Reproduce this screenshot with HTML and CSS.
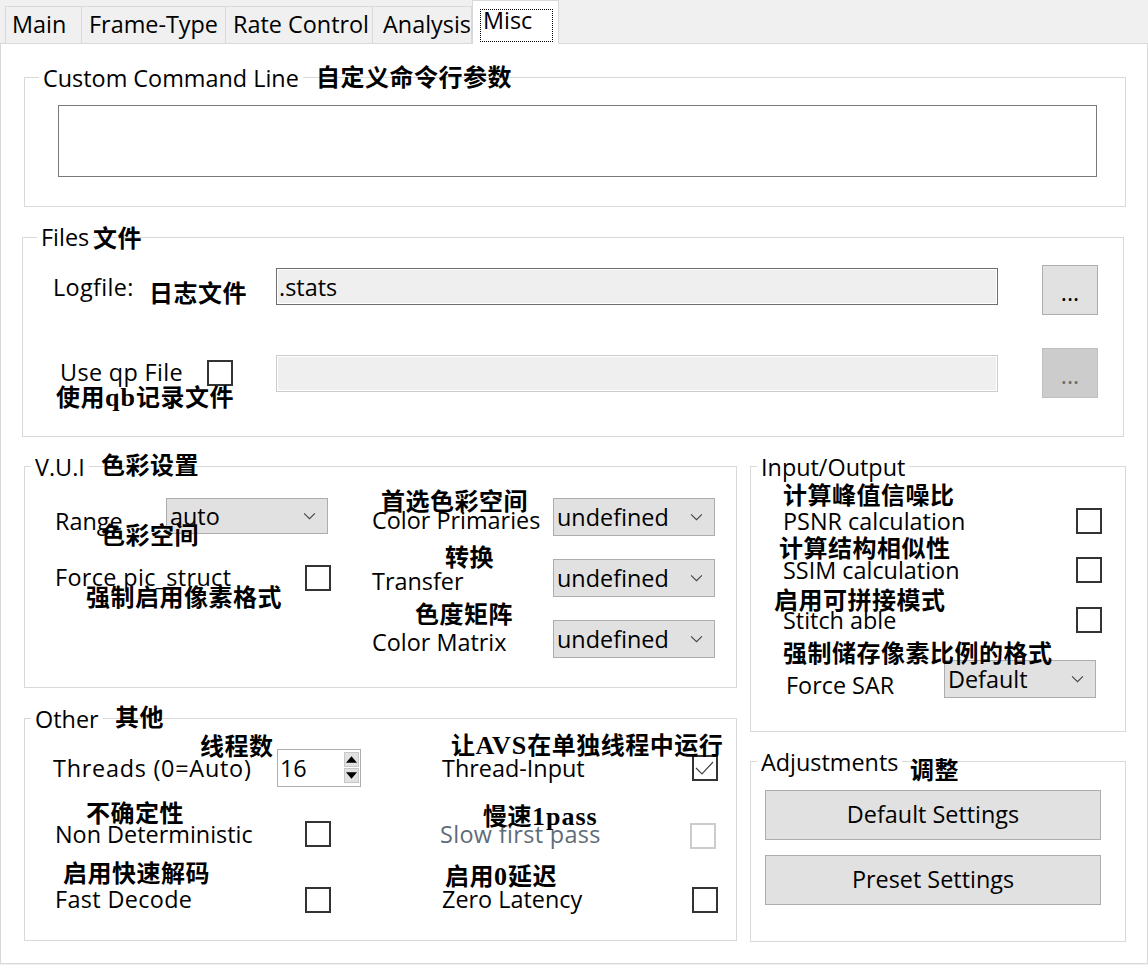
FILE: index.html
```html
<!DOCTYPE html>
<html lang="en">
<head>
    <meta charset="UTF-8">
    <meta name="viewport" content="width=device-width, initial-scale=1.0">
    <title>Misc settings</title>
    <link rel="stylesheet" href="styles.css">
</head>
<body>
    <div class="tabs">
        <div class="tab tab-main">Main</div>
        <div class="tab tab-frame">Frame-Type</div>
        <div class="tab tab-rate">Rate Control</div>
        <div class="tab tab-analysis">Analysis</div>
        <div class="tab tab-active"><span class="focus">Misc</span></div>
    </div>

    <div class="pane">
        <section class="group group-custom">
            <div class="group-title title-wide">Custom Command Line</div>
            <textarea class="command"></textarea>
            <span class="note note-custom">自定义命令行参数</span>
        </section>

        <section class="group group-files">
            <div class="group-title title-wide title-files">Files</div>
            <div class="files-grid">
                <label class="logfile-label label-wide">Logfile:</label>
                <input class="path path-log" type="text" value=".stats">
                <button class="browse" type="button">...</button>
                <label class="qp-label label-wide">Use qp File</label>
                <span class="check"></span>
                <input class="path" type="text" disabled>
                <button class="browse" type="button" disabled>...</button>
            </div>
            <span class="note note-files">文件</span>
            <span class="note note-logfile">日志文件</span>
            <span class="note note-qp">使用<span class="latin">qb</span>记录文件</span>
        </section>

        <div class="columns">
            <div class="column">
                <section class="group group-vui">
                    <div class="group-title">V.U.I</div>
                    <div class="vui-grid">
                        <div class="stack">
                            <div class="row">
                                <label class="label-range">Range</label>
                                <div class="select select-range">auto<svg class="chevron" viewBox="0 0 12 7"><path d="M1 1l5 5 5-5"/></svg></div>
                            </div>
                            <div class="row">
                                <label class="label-up label-wide">Force pic_struct</label>
                                <span class="check"></span>
                            </div>
                        </div>
                        <div class="stack">
                            <div class="row">
                                <label class="label-down">Color Primaries</label>
                                <div class="select">undefined<svg class="chevron" viewBox="0 0 12 7"><path d="M1 1l5 5 5-5"/></svg></div>
                            </div>
                            <div class="row">
                                <label class="label-down">Transfer</label>
                                <div class="select">undefined<svg class="chevron" viewBox="0 0 12 7"><path d="M1 1l5 5 5-5"/></svg></div>
                            </div>
                            <div class="row">
                                <label class="label-down">Color Matrix</label>
                                <div class="select">undefined<svg class="chevron" viewBox="0 0 12 7"><path d="M1 1l5 5 5-5"/></svg></div>
                            </div>
                        </div>
                    </div>
                    <span class="note note-vui">色彩设置</span>
                    <span class="note note-range">色彩空间</span>
                    <span class="note note-pic">强制启用像素格式</span>
                    <span class="note note-primaries">首选色彩空间</span>
                    <span class="note note-transfer">转换</span>
                    <span class="note note-matrix">色度矩阵</span>
                </section>

                <section class="group group-other">
                    <div class="group-title">Other</div>
                    <div class="other-grid">
                        <div class="stack stack-other">
                            <div class="row">
                                <label class="label-threads">Threads (0=Auto)</label>
                                <div class="spin">16
                                    <div class="spin-buttons">
                                        <span class="spin-btn"><svg viewBox="0 0 10 6"><path d="M5 0l5 6H0z"/></svg></span>
                                        <span class="spin-btn"><svg viewBox="0 0 10 6"><path d="M0 0h10L5 6z"/></svg></span>
                                    </div>
                                </div>
                            </div>
                            <div class="row row-inset">
                                <label>Non Deterministic</label>
                                <span class="check"></span>
                            </div>
                            <div class="row row-inset">
                                <label class="label-up label-wide">Fast Decode</label>
                                <span class="check"></span>
                            </div>
                        </div>
                        <div class="stack stack-other">
                            <div class="row">
                                <label>Thread-Input</label>
                                <span class="check"><svg viewBox="0 0 22 22"><path d="M2 11l6 6 11-12"/></svg></span>
                            </div>
                            <div class="row row-slow">
                                <label class="disabled label-wide">Slow first pass</label>
                                <span class="check check-disabled"></span>
                            </div>
                            <div class="row">
                                <label class="label-up">Zero Latency</label>
                                <span class="check"></span>
                            </div>
                        </div>
                    </div>
                    <span class="note note-other">其他</span>
                    <span class="note note-threads">线程数</span>
                    <span class="note note-nondet">不确定性</span>
                    <span class="note note-fast">启用快速解码</span>
                    <span class="note note-input">让<span class="latin">AVS</span>在单独线程中运行</span>
                    <span class="note note-slow">慢速<span class="latin">1pass</span></span>
                    <span class="note note-zero">启用<span class="latin">0</span>延迟</span>
                </section>
            </div>

            <div class="column">
                <section class="group group-io">
                    <div class="group-title">Input/Output</div>
                    <div class="io-list">
                        <div class="row">
                            <label>PSNR calculation</label>
                            <span class="check"></span>
                        </div>
                        <div class="row">
                            <label>SSIM calculation</label>
                            <span class="check"></span>
                        </div>
                        <div class="row row-stitch">
                            <label>Stitch able</label>
                            <span class="check"></span>
                        </div>
                        <div class="row row-sar">
                            <label class="label-sar">Force SAR</label>
                            <div class="select select-sar">Default<svg class="chevron" viewBox="0 0 12 7"><path d="M1 1l5 5 5-5"/></svg></div>
                        </div>
                    </div>
                    <span class="note note-psnr">计算峰值信噪比</span>
                    <span class="note note-ssim">计算结构相似性</span>
                    <span class="note note-stitch">启用可拼接模式</span>
                    <span class="note note-sar">强制储存像素比例的格式</span>
                </section>

                <section class="group group-adjust">
                    <div class="group-title">Adjustments</div>
                    <div class="adjust-list">
                        <button class="wide-btn" type="button">Default Settings</button>
                        <button class="wide-btn" type="button">Preset Settings</button>
                    </div>
                    <span class="note note-adjust">调整</span>
                </section>
            </div>
        </div>
    </div>
</body>
</html>
```

FILE: styles.css
```css
* {
    box-sizing: border-box;
}
body {
    margin: 0;
    height: 965px;
    overflow: hidden;
    background-color: #f0f0f0;
    color: #000;
    font-family: "Open Sans", "Noto Sans", sans-serif;
    font-size: 23.4px;
    line-height: 30px;
}
label {
    white-space: nowrap;
}

/* tabs */
.tabs {
    display: flex;
    align-items: flex-end;
    height: 43px;
    padding-left: 5px;
}
.tab {
    height: 37px;
    padding: 2px 0 0 7px;
    border: 1px solid #d9d9d9;
    border-bottom: none;
    border-left: none;
    background-color: #f0f0f0;
}
.tab-main {
    width: 77px;
    padding-left: 6px;
    border-left: 1px solid #d9d9d9;
}
.tab-frame {
    width: 144px;
}
.tab-rate {
    width: 147px;
}
.tab-analysis {
    width: 99px;
    padding-left: 10px;
}
.tab-active {
    position: relative;
    z-index: 1;
    width: 87px;
    height: 44px;
    margin-bottom: -1px;
    padding: 8px 0 0 7px;
    background-color: #fff;
    border-left: 1px solid #d9d9d9;
}
.focus {
    display: block;
    width: 73px;
    height: 33px;
    padding: 0 0 0 3px;
    line-height: 22px;
    outline: 1px dotted #000;
    outline-offset: -1px;
}

/* main pane */
.pane {
    width: 1148px;
    height: 921px;
    padding: 33px 0 0 23px;
    background-color: #fff;
    border: 1px solid #d9d9d9;
}
.columns {
    display: grid;
    grid-template-columns: 713px 376px;
    column-gap: 13px;
    margin-top: 29px;
}
.column {
    display: flex;
    flex-direction: column;
    gap: 29px;
}

.group {
    position: relative;
    border: 1px solid #d9d9d9;
}
.group-title {
    position: absolute;
    top: -15px;
    left: 6px;
    padding: 0 4px;
    background-color: #fff;
    white-space: nowrap;
}
.title-wide {
    left: 14px;
}
.title-files {
    top: -16px;
}

.row {
    display: flex;
    align-items: center;
    justify-content: space-between;
    height: 38px;
}
.stack {
    display: flex;
    flex-direction: column;
    gap: 23px;
}
.label-down {
    padding-top: 6px;
}
.label-up {
    padding-bottom: 3px;
}
.label-wide {
    letter-spacing: 0.35px;
}

/* groups */
.group-custom {
    width: 1102px;
    height: 130px;
    padding: 27px 0 0 33px;
}
.command {
    display: block;
    width: 1039px;
    height: 72px;
    border: 1px solid #7a7a7a;
    resize: none;
    background-color: #fff;
}

.group-files {
    width: 1102px;
    height: 200px;
    margin: 30px 0 0 -2px;
    padding: 27px 0 0 30px;
}
.files-grid {
    display: grid;
    grid-template-columns: 154px 69px 722px 44px 56px;
    grid-template-rows: 50px 50px;
    row-gap: 33px;
    align-items: center;
}
.logfile-label {
    grid-column: span 2;
    padding-bottom: 6px;
}
.qp-label {
    padding: 0 0 2px 7px;
    grid-column: 1;
}
.path {
    grid-column: 3;
    width: 722px;
    height: 37px;
    padding: 0 2px;
    border: 1px solid #6e6e6e;
    box-shadow: inset 0 0 0 1px #fff;
    background-color: #efefef;
    color: #000;
    font: inherit;
}
.path-log {
    margin-bottom: 7px;
}
.path:disabled {
    border-color: #ccc;
}
.browse {
    grid-column: 5;
    width: 56px;
    height: 50px;
    padding: 4px 0 0;
    border: 1px solid #adadad;
    background-color: #e1e1e1;
    color: #000;
    font: inherit;
}
.browse:disabled {
    background-color: #ccc;
    border-color: #bfbfbf;
    color: #6d6d6d;
}

.group-vui {
    height: 222px;
    padding-top: 31px;
    padding-left: 30px;
}
.vui-grid {
    display: grid;
    grid-template-columns: 276px 343px;
    column-gap: 41px;
}
.label-range {
    padding-top: 8px;
}
.select {
    display: flex;
    align-items: center;
    justify-content: space-between;
    width: 162px;
    height: 38px;
    padding: 0 11px 0 3px;
    border: 1px solid #adadad;
    background-color: #e1e1e1;
}
.select-range {
    height: 36px;
    margin: -2px 3px 0 0;
}
.select-sar {
    width: 152px;
}
.chevron {
    width: 13px;
    height: 8px;
    fill: none;
    stroke: #444;
    stroke-width: 1;
}
.check {
    flex: none;
    display: block;
    width: 26px;
    height: 26px;
    border: 2px solid #333;
    background-color: #fff;
}
.check svg {
    display: block;
    width: 22px;
    height: 22px;
    fill: none;
    stroke: #444;
    stroke-width: 1.2;
}
.check-disabled {
    margin-top: 4px;
    border-color: #ccc;
}
.disabled {
    color: #5f6b78;
}

.group-other {
    height: 223px;
    padding: 30px 0 0 28px;
    margin-top: 1px;
}
.other-grid {
    display: grid;
    grid-template-columns: 308px 276px;
    column-gap: 81px;
}
.stack-other {
    gap: 28px;
}
.label-threads {
    letter-spacing: 0.75px;
}
.row-inset {
    padding: 0 30px 0 2px;
}
.row-slow {
    padding-right: 2px;
    margin-left: -2px;
}
.spin {
    position: relative;
    width: 84px;
    height: 38px;
    padding-left: 2px;
    border: 1px solid #adadad;
    line-height: 36px;
}
.spin-buttons {
    position: absolute;
    top: 2px;
    right: 1px;
    display: flex;
    flex-direction: column;
    gap: 1px;
    width: 15px;
}
.spin-btn {
    display: flex;
    align-items: center;
    justify-content: center;
    height: 15px;
    background-color: #e1e1e1;
    border: 1px solid #c8c8c8;
}
.spin-btn svg {
    width: 11px;
    height: 7px;
    fill: #000;
}

.group-io {
    height: 266px;
    padding: 35px 0 0 32px;
}
.io-list {
    display: flex;
    flex-direction: column;
    gap: 11px;
    width: 319px;
}
.row-stitch {
    margin-top: 1px;
}
.row-sar {
    margin-top: 10px;
    padding: 0 6px 0 3px;
}
.label-sar {
    padding-top: 12px;
}

.group-adjust {
    height: 181px;
    padding: 28px 0 0 14px;
}
.adjust-list {
    display: flex;
    flex-direction: column;
    gap: 15px;
    width: 336px;
}
.wide-btn {
    height: 50px;
    padding-bottom: 4px;
    border: 1px solid #adadad;
    background-color: #e1e1e1;
    color: #000;
    font: inherit;
}

/* chinese notes added on top of the dialog */
.note {
    position: absolute;
    margin-top: -1px;
    white-space: nowrap;
    font-family: "Noto Sans CJK SC", sans-serif;
    font-size: 24px;
    font-weight: 700;
    line-height: 28px;
    letter-spacing: 0.5px;
}
.latin {
    font-family: "Liberation Serif", serif;
    font-size: 26px;
    letter-spacing: 1px;
}
.note-custom { left: 291px; top: -15px; }
.note-files { left: 70px; top: -14px; }
.note-logfile { left: 126px; top: 41px; }
.note-qp { left: 33px; top: 145px; }
.note-vui { left: 76px; top: -16px; }
.note-range { left: 76px; top: 54px; }
.note-pic { left: 61px; top: 116px; }
.note-primaries { left: 356px; top: 20px; }
.note-transfer { left: 420px; top: 76px; }
.note-matrix { left: 390px; top: 133px; }
.note-other { left: 90px; top: -16px; }
.note-threads { left: 175px; top: 13px; }
.note-nondet { left: 61px; top: 80px; }
.note-fast { left: 38px; top: 140px; }
.note-input { left: 426px; top: 12px; }
.note-slow { left: 458px; top: 83px; }
.note-zero { left: 420px; top: 143px; }
.note-psnr { left: 32px; top: 14px; }
.note-ssim { left: 28px; top: 67px; }
.note-stitch { left: 23px; top: 119px; }
.note-sar { left: 32px; top: 172px; }
.note-adjust { left: 159px; top: -6px; }
```
